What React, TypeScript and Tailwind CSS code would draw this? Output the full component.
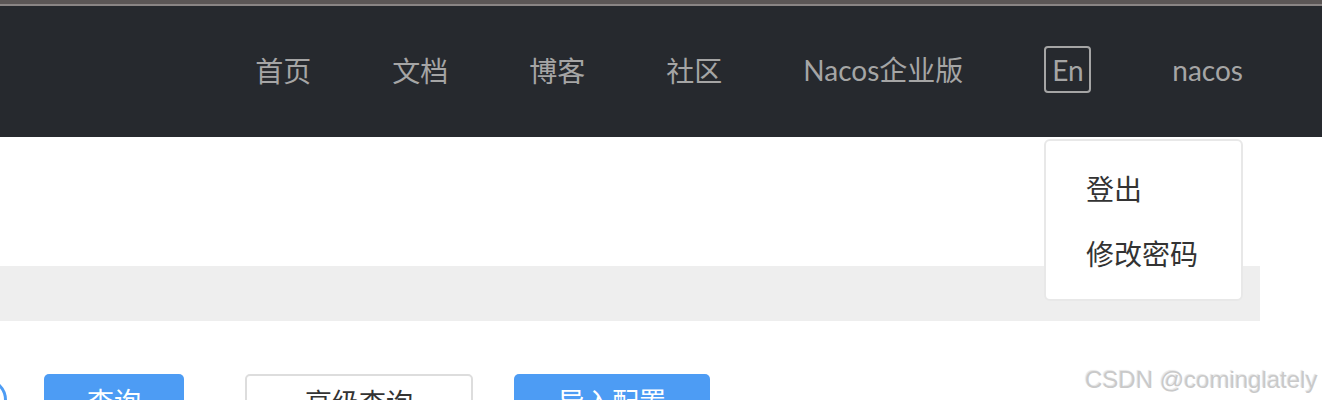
import React from "react";

export default function App() {
  const nav = ["首页", "文档", "博客", "社区"];
  return (
    <div className="relative w-[1322px] h-[400px] overflow-hidden bg-white font-['Noto_Sans_CJK_SC','Noto_Sans',sans-serif]">
      <div className="h-[4px] bg-[#5b5656]" />
      <div className="h-[2px] bg-[#8a8585]" />
      <header className="h-[131px] bg-[#26292e] flex items-center justify-end pr-[79px] pb-[4px] text-[#a5a5a5]">
        <nav className="flex items-center gap-[81px] text-[28px] leading-none">
          {nav.map((n) => (
            <span key={n}>{n}</span>
          ))}
          <span>
            <span className="font-['Lato',sans-serif]">Nacos</span>企业版
          </span>
          <span className="w-[47px] h-[47px] border-2 border-[#a5a5a5] rounded-[4px] flex items-center justify-center text-[28px] font-['Lato',sans-serif]">
            En
          </span>
          <span className="font-['Lato',sans-serif]">nacos</span>
        </nav>
      </header>

      <div className="h-[129px]" />
      <div className="w-[1260px] h-[55px] bg-[#eeeeee]" />

      <div className="mt-[53px] flex items-start">
        <div className="-ml-[37px] mt-[4px] w-[44px] h-[44px] rounded-full border-[3px] border-[#4d9cf4]" />
        <button className="ml-[37px] w-[140px] h-[48px] rounded-[5px] bg-[#4d9cf4] text-white text-[27px] pt-[6px]">
          查询
        </button>
        <button className="ml-[61px] w-[228px] h-[48px] rounded-[5px] border-2 border-[#dddddd] bg-white text-[#333333] text-[27px] pt-[6px]">
          高级查询
        </button>
        <button className="ml-[41px] w-[196px] h-[48px] rounded-[5px] bg-[#4d9cf4] text-white text-[27px] pt-[6px]">
          导入配置
        </button>
      </div>

      <div className="absolute left-[1044px] top-[139px] w-[199px] h-[162px] bg-white border-2 border-[#e8e8e8] rounded-[6px] pl-[40px] pt-[33px] flex flex-col gap-[37px] text-[28px] leading-none text-[#333333]">
        <span>登出</span>
        <span>修改密码</span>
      </div>

      <div className="absolute left-[1085px] top-[362px] text-[24px] text-[#c9c9c9] font-['Liberation_Sans',Arial,sans-serif] [text-shadow:1px_1px_1px_#ffffff,-1px_-1px_1px_#e4e4e4]">
        CSDN @cominglately
      </div>
    </div>
  );
}
